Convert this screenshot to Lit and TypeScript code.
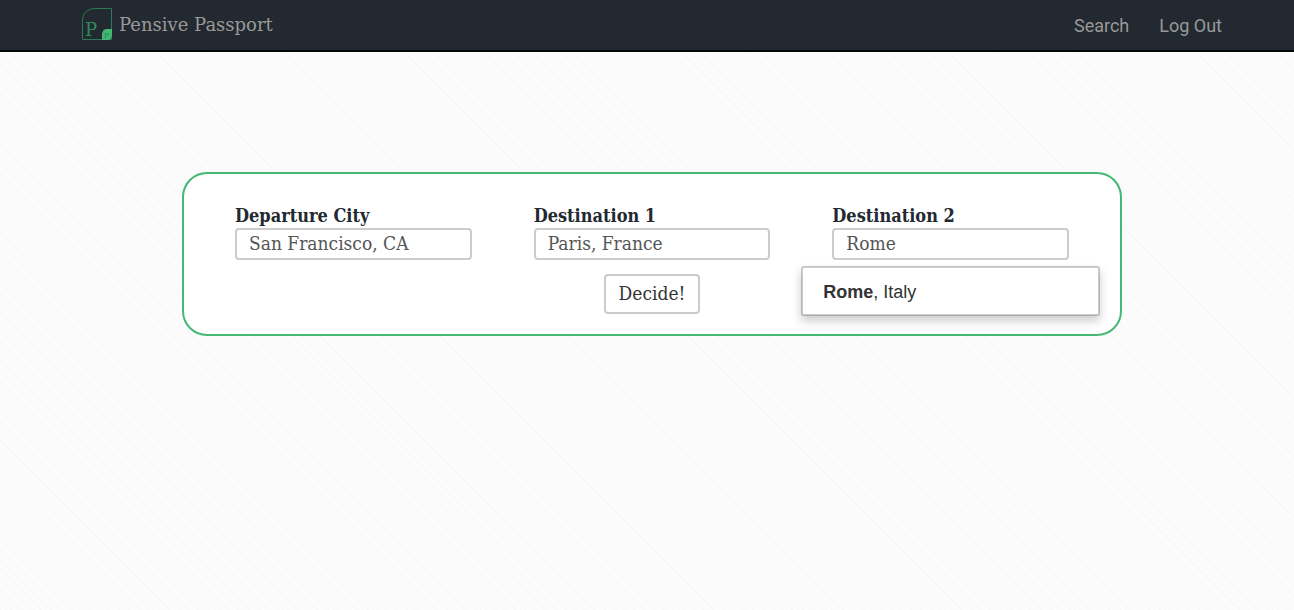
import { LitElement, html, css } from "lit";
import { customElement, property } from "lit/decorators.js";

@customElement("site-header")
class SiteHeader extends LitElement {
  static styles = css`
    :host {
      display: block;
      background: #222930;
      border-bottom: 2px solid #080808;
    }
    .bar {
      display: flex;
      align-items: center;
      justify-content: space-between;
      max-width: 1170px;
      height: 50px;
      margin: 0 auto;
      padding: 0 10px 2px 20px;
      box-sizing: border-box;
    }
    .brand {
      display: flex;
      align-items: center;
      gap: 7px;
      color: #999;
      text-decoration: none;
      font: 18px/24px "DejaVu Serif", serif;
    }
    .name {
      padding-top: 2px;
    }
    .logo {
      display: block;
      width: 30px;
      height: 32px;
    }
    .letter {
      font-family: "DejaVu Serif", serif;
      font-size: 18px;
      fill: #32885c;
    }
    .small {
      font-size: 7px;
      fill: #2b7d52;
    }
    .links {
      display: flex;
      gap: 30px;
      padding-top: 4px;
    }
    .link {
      color: #999;
      text-decoration: none;
      font: 18px/24px Roboto, sans-serif;
    }
  `;

  render() {
    return html`
      <nav class="bar">
        <a class="brand" href="#">
          <svg class="logo" viewBox="0 0 30 32" aria-hidden="true">
            <path
              d="M0.5 31.5V13C0.5 5 6 0.5 13 0.5H29.5V31.5Z"
              fill="none"
              stroke="#2d7b54"
            />
            <text class="letter" x="3" y="28">P</text>
            <path
              d="M20 32V27C20 23 22 21 25 21H30V26C30 30 28 32 25 32Z"
              fill="#43b872"
            />
            <text class="letter small" x="22" y="30">P</text>
          </svg>
          <span class="name">Pensive Passport</span>
        </a>
        <div class="links">
          <a class="link" href="#search">Search</a>
          <a class="link" href="#logout">Log Out</a>
        </div>
      </nav>
    `;
  }
}

@customElement("city-field")
class CityField extends LitElement {
  @property() label = "";
  @property() value = "";
  @property() match = "";
  @property() rest = "";

  static styles = css`
    :host {
      display: block;
      position: relative;
      padding: 0 31px;
      font-family: "DejaVu Serif Condensed", "DejaVu Serif", serif;
    }
    .label {
      display: block;
      color: #222930;
      font-size: 18px;
      font-weight: 700;
      line-height: 24px;
    }
    .input {
      display: block;
      width: 100%;
      height: 32px;
      box-sizing: border-box;
      padding: 0 12px 2px;
      border: 2px solid #ccc;
      border-radius: 4px;
      outline: none;
      background: #fff;
      color: #555;
      font-family: inherit;
      font-size: 19px;
    }
    .menu {
      position: absolute;
      top: 100%;
      left: 0;
      right: 0;
      z-index: 1;
      margin: 6px 0 0;
      padding: 6px 0 4px;
      box-sizing: border-box;
      list-style: none;
      border: 2px solid rgba(0, 0, 0, 0.2);
      border-radius: 3px;
      background: #fff;
      background-clip: padding-box;
      box-shadow: 0 5px 10px rgba(0, 0, 0, 0.2);
    }
    .option {
      padding: 6px 20px;
      color: #333;
      font: 18px/24px "Liberation Sans", Arial, sans-serif;
    }
  `;

  render() {
    return html`
      <label class="label" for="city">${this.label}</label>
      <input class="input" id="city" type="text" autocomplete="off" .value=${this.value} />
      ${this.match
        ? html`<ul class="menu" role="listbox" aria-label="Suggestions">
            <li class="option" role="option"><strong>${this.match}</strong>${this.rest}</li>
          </ul>`
        : null}
    `;
  }
}

@customElement("app-root")
class AppRoot extends LitElement {
  static styles = css`
    :host {
      display: block;
      min-height: 100vh;
      background-color: #fcfcfc;
      background-image: repeating-linear-gradient(
          45deg,
          rgba(0, 0, 0, 0.008) 0 1px,
          transparent 1px 4px
        ),
        repeating-linear-gradient(45deg, rgba(0, 0, 0, 0.006) 0 2px, transparent 2px 7px);
    }
    .main {
      padding: 120px 20px 40px 30px;
    }
    .card {
      max-width: 940px;
      margin: 0 auto;
      padding: 30px 20px 20px;
      box-sizing: border-box;
      border: 2px solid #43b872;
      border-radius: 25px;
      background: #fff;
    }
    .fields {
      display: grid;
      grid-template-columns: repeat(3, minmax(0, 1fr));
    }
    .actions {
      display: flex;
      justify-content: center;
      margin-top: 14px;
    }
    .decide {
      height: 40px;
      padding: 0 13px 2px;
      border: 2px solid #ccc;
      border-radius: 4px;
      background: #fff;
      color: #333;
      font: 19px/24px "DejaVu Serif Condensed", "DejaVu Serif", serif;
    }
  `;

  render() {
    return html`
      <site-header></site-header>
      <main class="main">
        <form class="card" @submit=${(e: Event) => e.preventDefault()}>
          <div class="fields">
            <city-field label="Departure City" value="San Francisco, CA"></city-field>
            <city-field label="Destination 1" value="Paris, France"></city-field>
            <city-field label="Destination 2" value="Rome" match="Rome" rest=", Italy"></city-field>
          </div>
          <div class="actions">
            <button class="decide" type="submit">Decide!</button>
          </div>
        </form>
      </main>
    `;
  }
}
